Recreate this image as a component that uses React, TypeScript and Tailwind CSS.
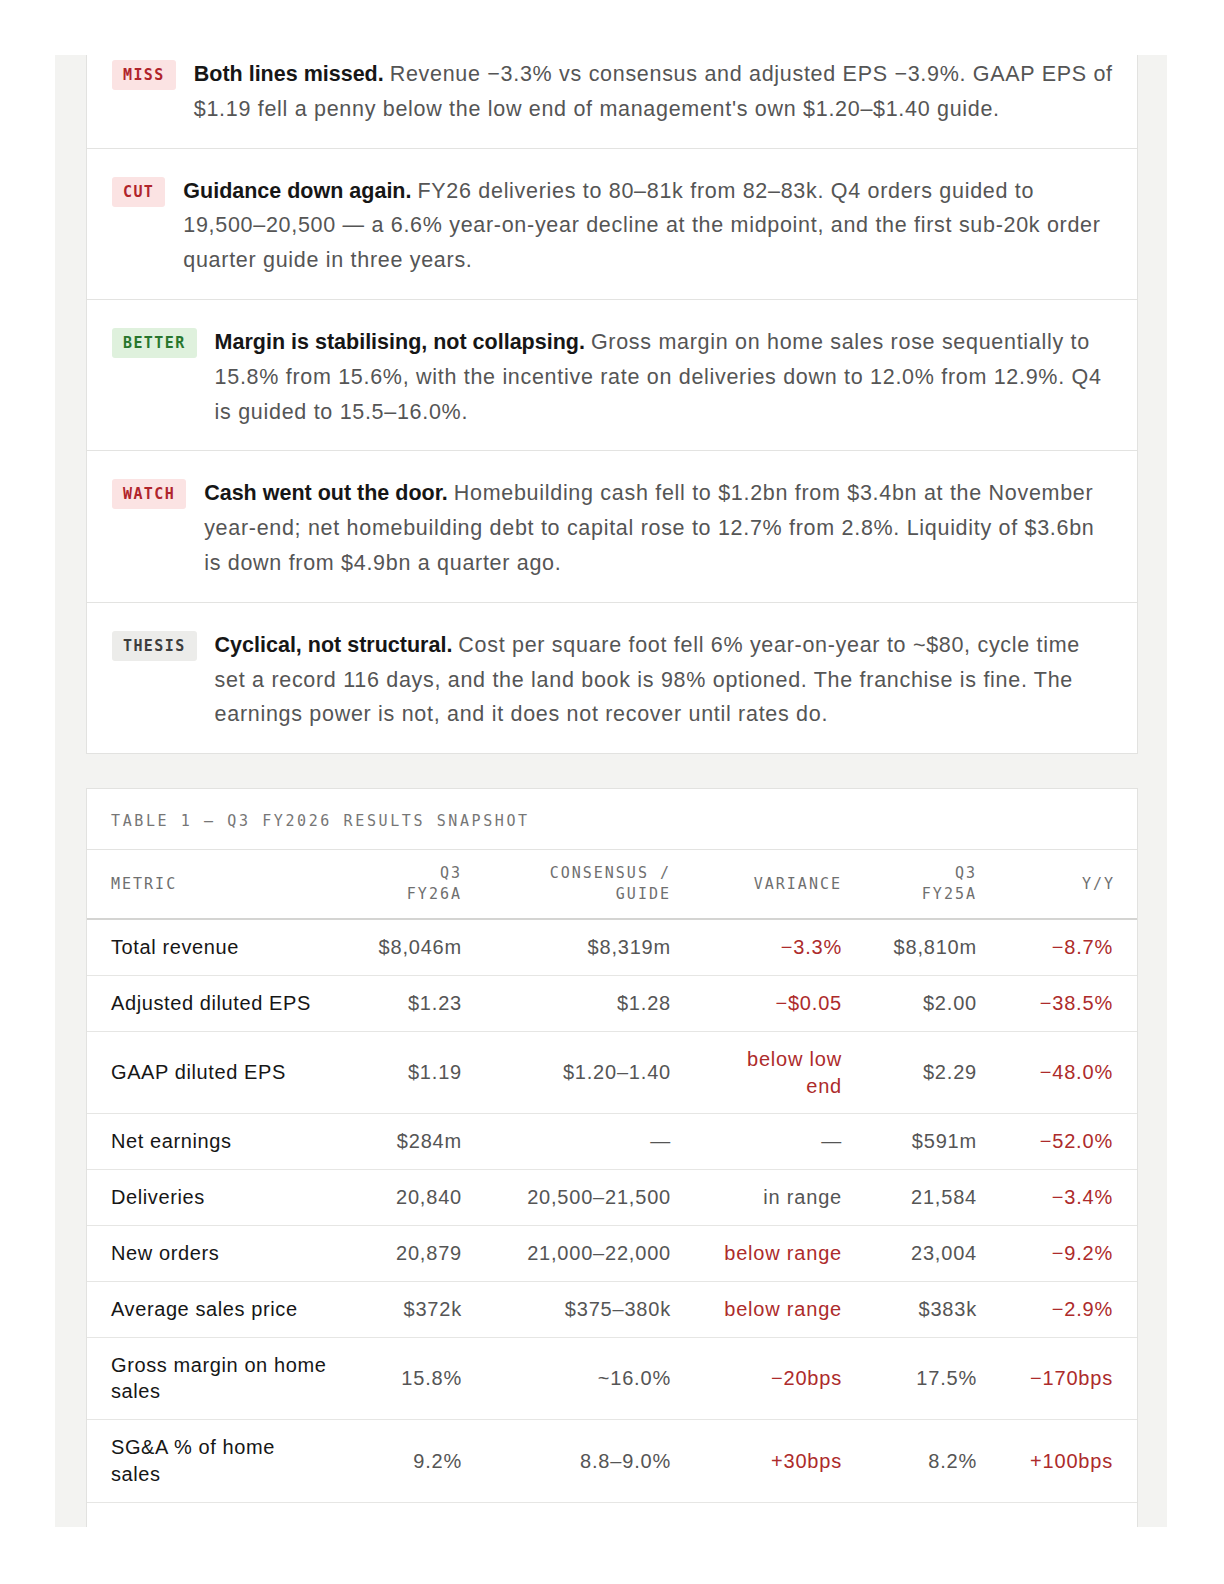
import React from 'react';

type Tone = 'red' | 'green' | 'gray';

const badgeTone: Record<Tone, string> = {
    red: 'bg-[#fbe3e3] text-[#b0242b]',
    green: 'bg-[#dff1dd] text-[#27762c]',
    gray: 'bg-[#ececea] text-[#3d3d3d]',
};

// each finding keeps the reference's line breaks; lead is bold on the first line
const findings: { tag: string; tone: Tone; lead: string; lines: string[] }[] = [
    {
        tag: 'MISS',
        tone: 'red',
        lead: 'Both lines missed.',
        lines: [
            'Revenue −3.3% vs consensus and adjusted EPS −3.9%. GAAP EPS of',
            "$1.19 fell a penny below the low end of management's own $1.20–$1.40 guide.",
        ],
    },
    {
        tag: 'CUT',
        tone: 'red',
        lead: 'Guidance down again.',
        lines: [
            'FY26 deliveries to 80–81k from 82–83k. Q4 orders guided to',
            '19,500–20,500 — a 6.6% year-on-year decline at the midpoint, and the first sub-20k order',
            'quarter guide in three years.',
        ],
    },
    {
        tag: 'BETTER',
        tone: 'green',
        lead: 'Margin is stabilising, not collapsing.',
        lines: [
            'Gross margin on home sales rose sequentially to',
            '15.8% from 15.6%, with the incentive rate on deliveries down to 12.0% from 12.9%. Q4',
            'is guided to 15.5–16.0%.',
        ],
    },
    {
        tag: 'WATCH',
        tone: 'red',
        lead: 'Cash went out the door.',
        lines: [
            'Homebuilding cash fell to $1.2bn from $3.4bn at the November',
            'year-end; net homebuilding debt to capital rose to 12.7% from 2.8%. Liquidity of $3.6bn',
            'is down from $4.9bn a quarter ago.',
        ],
    },
    {
        tag: 'THESIS',
        tone: 'gray',
        lead: 'Cyclical, not structural.',
        lines: [
            'Cost per square foot fell 6% year-on-year to ~$80, cycle time',
            'set a record 116 days, and the land book is 98% optioned. The franchise is fine. The',
            'earnings power is not, and it does not recover until rates do.',
        ],
    },
];

type Cell = { lines: string[]; red?: boolean };
const c = (s: string, red = false): Cell => ({ lines: s.split('|'), red });

const rows: { metric: string[]; cells: Cell[] }[] = [
    { metric: ['Total revenue'], cells: [c('$8,046m'), c('$8,319m'), c('−3.3%', true), c('$8,810m'), c('−8.7%', true)] },
    { metric: ['Adjusted diluted EPS'], cells: [c('$1.23'), c('$1.28'), c('−$0.05', true), c('$2.00'), c('−38.5%', true)] },
    { metric: ['GAAP diluted EPS'], cells: [c('$1.19'), c('$1.20–1.40'), c('below low|end', true), c('$2.29'), c('−48.0%', true)] },
    { metric: ['Net earnings'], cells: [c('$284m'), c('—'), c('—'), c('$591m'), c('−52.0%', true)] },
    { metric: ['Deliveries'], cells: [c('20,840'), c('20,500–21,500'), c('in range'), c('21,584'), c('−3.4%', true)] },
    { metric: ['New orders'], cells: [c('20,879'), c('21,000–22,000'), c('below range', true), c('23,004'), c('−9.2%', true)] },
    { metric: ['Average sales price'], cells: [c('$372k'), c('$375–380k'), c('below range', true), c('$383k'), c('−2.9%', true)] },
    { metric: ['Gross margin on home', 'sales'], cells: [c('15.8%'), c('~16.0%'), c('−20bps', true), c('17.5%'), c('−170bps', true)] },
    { metric: ['SG&A % of home', 'sales'], cells: [c('9.2%'), c('8.8–9.0%'), c('+30bps', true), c('8.2%'), c('+100bps', true)] },
];

const headers: string[][] = [['METRIC'], ['Q3', 'FY26A'], ['CONSENSUS /', 'GUIDE'], ['VARIANCE'], ['Q3', 'FY25A'], ['Y/Y']];
const colWidths = ['w-[250px]', 'w-[137px]', 'w-[209px]', 'w-[171px]', 'w-[135px]', 'w-[148px]'];

const sans = "font-['Liberation_Sans',Arial,sans-serif]";
const mono = "font-['DejaVu_Sans_Mono','Liberation_Mono',monospace]";

function Finding({ f, last }: { f: (typeof findings)[number]; last: boolean }) {
    return (
        <div className={`flex items-start gap-[18px] pb-[21px] pl-[25px] pr-[24px] pt-[25px] ${last ? '' : 'border-b border-[#e3e3e1]'}`}>
            <span
                className={`${mono} ${badgeTone[f.tone]} mt-[3px] shrink-0 rounded-[3px] px-[11px] py-[5px] text-[15px] font-bold leading-5 tracking-[1.4px]`}
            >
                {f.tag}
            </span>
            <p className="text-[21.5px] leading-[34.8px] tracking-[0.7px] text-[#555555]">
                {f.lines.map((line, i) => (
                    <span key={i} className="block whitespace-nowrap">
                        {i === 0 && <strong className="font-bold tracking-normal text-[#161616]">{f.lead} </strong>}
                        {line}
                    </span>
                ))}
            </p>
        </div>
    );
}

export default function App() {
    return (
        <div className={`${sans} h-[1584px] w-full bg-white pl-[55px] pt-[55px]`}>
            <div className="h-[1472px] w-[1112px] overflow-hidden bg-[#f3f3f1] pl-[31px] pr-[29px]">
                {/* Findings card, scrolled so its top is clipped */}
                <div className="-mt-[24px] border border-[#e2e2e0] bg-white">
                    {findings.map((f, i) => (
                        <Finding key={f.tag} f={f} last={i === findings.length - 1} />
                    ))}
                </div>

                {/* Results table */}
                <div className="mt-[34px] border border-[#e2e2e0] bg-white pb-[60px]">
                    <div
                        className={`${mono} border-b border-[#e3e3e1] pb-[17px] pl-[24px] pt-[22px] text-[15px] leading-[21px] tracking-[2.6px] text-[#767676]`}
                    >
                        TABLE 1 — Q3 FY2026 RESULTS SNAPSHOT
                    </div>
                    <table className="w-full table-fixed border-collapse">
                        <colgroup>
                            {colWidths.map((w, i) => (
                                <col key={i} className={w} />
                            ))}
                        </colgroup>
                        <thead>
                            <tr className="border-b-2 border-[#d4d4d2]">
                                {headers.map((h, i) => (
                                    <th
                                        key={i}
                                        className={`${mono} py-[13px] align-middle text-[15px] font-medium leading-[21px] tracking-[2px] text-[#6f6f6f] ${
                                            i === 0 ? 'pl-[24px] pr-3 text-left' : i === 5 ? 'pl-3 pr-[22px] text-right' : 'px-3 text-right'
                                        }`}
                                    >
                                        {h.map((l) => (
                                            <span key={l} className="block whitespace-nowrap">
                                                {l}
                                            </span>
                                        ))}
                                    </th>
                                ))}
                            </tr>
                        </thead>
                        <tbody>
                            {rows.map((r) => (
                                <tr key={r.metric.join(' ')} className="border-b border-[#e6e6e4]">
                                    <td className="py-[14px] pl-[24px] pr-3 align-middle text-[20px] leading-[26.8px] tracking-[0.6px] text-[#161616]">
                                        {r.metric.map((l) => (
                                            <span key={l} className="block whitespace-nowrap">
                                                {l}
                                            </span>
                                        ))}
                                    </td>
                                    {r.cells.map((cell, i) => (
                                        <td
                                            key={i}
                                            className={`py-[14px] align-middle text-right text-[20px] leading-[26.8px] tracking-[0.8px] ${
                                                cell.red ? 'text-[#ad2b2b]' : 'text-[#555555]'
                                            } ${i === 4 ? 'pl-3 pr-[24px]' : 'px-3'}`}
                                        >
                                            {cell.lines.map((l) => (
                                                <span key={l} className="block whitespace-nowrap">
                                                    {l}
                                                </span>
                                            ))}
                                        </td>
                                    ))}
                                </tr>
                            ))}
                        </tbody>
                    </table>
                </div>
            </div>
        </div>
    );
}
